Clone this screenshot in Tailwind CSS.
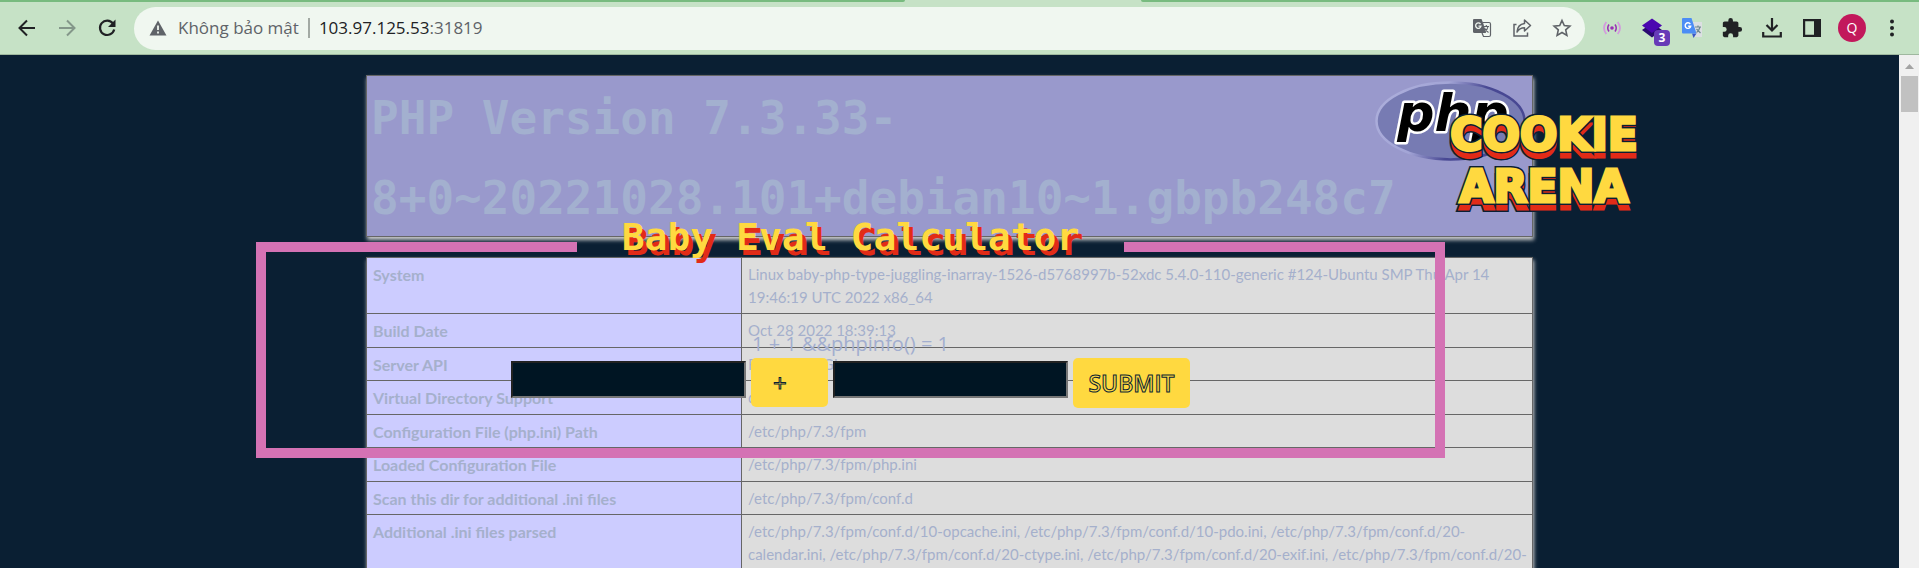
<!DOCTYPE html>
<html lang="vi">
<head>
<meta charset="utf-8">
<title>Baby Eval Calculator</title>
<script src="https://cdn.jsdelivr.net/npm/@tailwindcss/browser@4"></script>
</head>
<body class="flex h-screen flex-col overflow-hidden bg-[#0a1f33] font-['Open_Sans',sans-serif]">

<!-- bottom edge of the tab strip, with the active tab in the toolbar colour -->
<div aria-hidden="true" class="flex h-0.5 shrink-0 bg-[#c6e2c6]">
  <div class="w-[905px] rounded-br-sm bg-[#78bb7f]"></div>
  <div class="w-[236px]"></div>
  <div class="flex-1 rounded-bl-sm bg-[#78bb7f]"></div>
</div>

<header class="flex h-[53px] shrink-0 items-center border-b border-b-[#9fb89f] bg-[#c6e2c6] px-[7px] text-[#202124]">
  <button aria-label="Back" class="flex w-10 justify-center"><svg width="20" height="20" viewBox="0 0 20 20" fill="none" stroke="#202124" stroke-width="2"><path d="M18 10H3M10 2.500L2.500 10L10 17.500"/></svg></button>
  <button aria-label="Forward" class="flex w-10 justify-center"><svg width="20" height="20" viewBox="0 0 20 20" fill="none" stroke="#84978a" stroke-width="2"><path d="M2 10H17M10 2.500L17.500 10L10 17.500"/></svg></button>
  <button aria-label="Reload" class="flex w-10 justify-center"><svg width="20" height="20" viewBox="0 0 20 20"><path d="M16 5.500A7.200 7.200 0 1 0 17.200 11.500" fill="none" stroke="#202124" stroke-width="2.200"/><path d="M18.500 1.500V9H11Z" fill="#202124"/></svg></button>

  <div class="mx-[7px] flex h-[43px] flex-1 items-center rounded-full bg-[#f0f7f0] pr-[3px] pl-[15px] text-[17px] whitespace-nowrap">
    <svg width="18" height="16" viewBox="0 0 18 16" aria-hidden="true"><path d="M9 0.500L17.500 15.500H.5Z" fill="#5f6368"/><path d="M9 5.500V10M9 11.500V13.500" stroke="#f0f7f0" stroke-width="1.800"/></svg>
    <span class="ml-[11px] text-[#5f6368]">Không bảo mật</span>
    <span class="mx-[9px] h-5 w-0.5 bg-[#a3aaa4]"></span>
    <span class="text-[#202124]">103.97.125.53<span class="text-[#5f6368]">:31819</span></span>
    <div class="ml-auto flex">
      <button aria-label="Translate this page" class="flex w-10 justify-center"><svg width="20" height="20" viewBox="0 0 20 20"><path d="M2 1H9.500L11.500 6L14 15H2.500Q1 15 1 13.500V2Q1 1 2 1Z" fill="#5f6368"/><path d="M10.500 4.500H17Q18.500 4.500 18.500 6V17Q18.500 18.500 17 18.500H11.500L10 15" fill="none" stroke="#5f6368" stroke-width="1.200"/><path d="M8.500 6A2.700 2.700 0 1 0 9 8.200H6.500" fill="none" stroke="#f0f7f0" stroke-width="1.300"/><path d="M11.500 8.500H17M14.300 7V8.500M16 8.500Q15.500 12 12.500 14M12.500 10Q14 13 16.500 14.500" fill="none" stroke="#5f6368" stroke-width="1.100"/></svg></button>
      <button aria-label="Share" class="flex w-10 justify-center"><svg width="20" height="20" viewBox="0 0 20 20" fill="none" stroke="#5f6368" stroke-width="1.500"><path d="M4.500 6.500H2V18H15.500V14.500"/><path d="M12.500 2L18.500 7.500L12.500 13V9.800Q7.500 9.800 5 14Q5.500 6.500 12.500 5.500Z" stroke-linejoin="round"/></svg></button>
      <button aria-label="Bookmark" class="flex w-10 justify-center"><svg width="20" height="20" viewBox="0 0 20 20" fill="none" stroke="#5f6368" stroke-width="1.600"><path d="M10 2.500L12.300 7.600L17.900 8.200L13.700 11.900L14.900 17.400L10 14.500L5.100 17.400L6.300 11.900L2.100 8.200L7.700 7.600Z"/></svg></button>
    </div>
  </div>

  <nav aria-label="Extensions" class="flex items-center">
    <button aria-label="Live signal" class="flex w-10 justify-center"><svg width="20" height="20" viewBox="0 0 20 20" fill="none"><circle cx="10" cy="10" r="1.800" fill="#9a2fb5"/><path d="M7 6.500Q4.500 10 7 13.500M13 6.500Q15.500 10 13 13.500" stroke="#9a2fb5" stroke-width="1.500"/><path d="M4.300 4Q-.3 10 4.300 16M15.700 4Q20.300 10 15.700 16" stroke="#d39add" stroke-width="1.800"/></svg></button>
    <button aria-label="Layers, 3" class="flex w-10 justify-center"><span class="relative"><svg width="20" height="20" viewBox="0 0 20 20"><path d="M0 12L10 5L20 12L10 19.500Z" fill="#2a0a70"/><path d="M0 7.500L10 .5L20 7.500L10 15Z" fill="#4a06b0"/></svg><span class="absolute -right-2 -bottom-2 flex size-4 items-center justify-center rounded-sm bg-[#673ab7] text-xs font-bold text-white">3</span></span></button>
    <button aria-label="Google Translate" class="flex w-10 justify-center"><svg width="20" height="20" viewBox="0 0 20 20"><path d="M9 4H20V19H13Z" fill="#dcdfe2"/><path d="M10 15.500H14.500L11.500 20Z" fill="#3a55c5"/><path d="M1 0H9.500L14.500 15.500H1Q0 15.500 0 14.500V1Q0 0 1 0Z" fill="#4c8df5"/><path d="M8.300 6A2.800 2.800 0 1 0 8.700 8.300H6.200" fill="none" stroke="#fff" stroke-width="1.400"/><path d="M13 9H19M16 7.500V9M18 9Q17 13 14.500 14.500M14.500 11L18.500 15" fill="none" stroke="#6d8790" stroke-width="1.200"/></svg></button>
    <button aria-label="Extensions menu" class="flex w-10 justify-center"><svg width="22" height="22" viewBox="0 0 24 24"><path fill="#202124" d="M20.500 11H19V7c0-1.100-.9-2-2-2h-4V3.500a2.500 2.500 0 0 0-5 0V5H4c-1.100 0-2 .9-2 2v3.800h1.500a2.700 2.700 0 0 1 0 5.400H2V20c0 1.100.9 2 2 2h3.800v-1.500a2.700 2.700 0 0 1 5.400 0V22H17c1.100 0 2-.9 2-2v-4h1.500a2.500 2.500 0 0 0 0-5z"/></svg></button>
    <button aria-label="Downloads" class="flex w-10 justify-center"><svg width="20" height="20" viewBox="0 0 20 20" fill="none" stroke="#202124" stroke-width="2.200"><path d="M10 0V12M4.500 7L10 12.500L15.500 7M1.200 14V18.500H18.800V14"/></svg></button>
    <button aria-label="Side panel" class="flex w-10 justify-center"><svg width="18" height="18" viewBox="0 0 18 18"><path fill="#202124" fill-rule="evenodd" d="M0 0H18V18H0ZM2.200 2.200V15.800H11V2.200Z"/></svg></button>
    <button aria-label="Profile" class="flex w-10 justify-center"><span class="flex size-7 items-center justify-center rounded-full bg-[#c2185b] text-sm text-white">Q</span></button>
    <button aria-label="Menu" class="flex w-10 justify-center"><svg width="4" height="18" viewBox="0 0 4 18" fill="#202124"><circle cx="2" cy="2.500" r="2"/><circle cx="2" cy="9" r="2"/><circle cx="2" cy="15.500" r="2"/></svg></button>
  </nav>
</header>

<div class="flex min-h-0 flex-1">
  <main class="relative min-w-0 flex-1 overflow-hidden pt-5 text-[#a5b0cc]">
    <section class="mx-auto mb-5 flex w-[1167px] max-w-full justify-between border border-[#666] bg-[#9999cc] pl-1 shadow-[1px_3px_4px_#ccc]">
      <h1 class="h-40 pt-0.5 font-['DejaVu_Sans_Mono',monospace] text-[46px] leading-[80px] font-bold whitespace-nowrap text-[#a3b0cf]">PHP Version 7.3.33-<br>8+0~20221028.101+debian10~1.gbpb248c7</h1>
      <svg class="mt-[5px] mr-1.5 -ml-24 shrink-0" width="151" height="80" viewBox="0 0 151 80" role="img" aria-label="PHP logo">
        <defs><linearGradient id="rim" x1="0" y1="0" x2="1" y2="0.300"><stop offset="0" stop-color="#aeb0dc"/><stop offset=".45" stop-color="#a3a5d6"/><stop offset=".7" stop-color="#484893"/><stop offset="1" stop-color="#484893"/></linearGradient></defs>
        <ellipse cx="75.500" cy="40" rx="74" ry="38.500" fill="#777bb3" stroke="url(#rim)" stroke-width="2.500"/>
        <text x="78" y="50" text-anchor="middle" font-family="DejaVu Sans" font-weight="bold" font-style="italic" font-size="52" fill="#000" stroke="#fff" stroke-width="5" paint-order="stroke" stroke-linejoin="round">php</text>
      </svg>
    </section>

    <table class="mx-auto w-[1167px] max-w-full table-fixed border-collapse text-left align-top font-['Lato',sans-serif] leading-[23px] shadow-[1px_3px_4px_#ccc] [&_td]:border [&_td]:border-[#666] [&_td]:bg-[#dddddd] [&_td]:px-1.5 [&_td]:pt-[5px] [&_td]:pb-1 [&_td]:align-top [&_td]:text-[15px] [&_td]:leading-[23px] [&_th]:border [&_th]:border-[#666] [&_th]:bg-[#ccccff] [&_th]:px-1.5 [&_th]:pt-[5px] [&_th]:pb-1 [&_th]:align-top [&_tr:nth-child(even)>*]:pb-[5px]">
      <colgroup><col class="w-[375px]"><col></colgroup>
      <tbody>
        <tr><th scope="row">System</th><td>Linux baby-php-type-juggling-inarray-1526-d5768997b-52xdc 5.4.0-110-generic #124-Ubuntu SMP Thu Apr 14<br>19:46:19 UTC 2022 x86_64</td></tr>
        <tr><th scope="row">Build Date</th><td>Oct 28 2022 18:39:13</td></tr>
        <tr><th scope="row">Server API</th><td>FPM/FastCGI</td></tr>
        <tr><th scope="row">Virtual Directory Support</th><td>disabled</td></tr>
        <tr><th scope="row">Configuration File (php.ini) Path</th><td>/etc/php/7.3/fpm</td></tr>
        <tr><th scope="row">Loaded Configuration File</th><td>/etc/php/7.3/fpm/php.ini</td></tr>
        <tr><th scope="row">Scan this dir for additional .ini files</th><td>/etc/php/7.3/fpm/conf.d</td></tr>
        <tr><th scope="row">Additional .ini files parsed</th><td class="whitespace-nowrap">/etc/php/7.3/fpm/conf.d/10-opcache.ini, /etc/php/7.3/fpm/conf.d/10-pdo.ini, /etc/php/7.3/fpm/conf.d/20-<br>calendar.ini, /etc/php/7.3/fpm/conf.d/20-ctype.ini, /etc/php/7.3/fpm/conf.d/20-exif.ini, /etc/php/7.3/fpm/conf.d/20-</td></tr>
      </tbody>
    </table>

    <!-- calculator and logo float over the phpinfo output -->
    <form class="absolute inset-x-0 top-[58px] flex items-start justify-center">
      <fieldset class="mt-[99px] h-[246px] w-[1189px] border-10 border-[#d472b4]">
        <legend class="mx-auto h-[70px] px-[45px] font-['DejaVu_Sans_Mono',monospace] text-[38px] leading-[50px] font-bold whitespace-nowrap text-[#ffd940] text-shadow-[4px_5px_0_#e22b17]">Baby Eval Calculator</legend>
        <p class="mt-12 text-center text-[20px] leading-7 text-[#a2aecf]">1 + 1 &amp;&amp;phpinfo() = 1</p>
        <div class="flex items-start justify-center gap-[5px] text-2xl">
          <input aria-label="First number" class="mt-[3px] h-[37px] w-[235px] border-2 border-t-[#222] border-r-[#767676] border-b-[#767676] border-l-[#222] bg-[#001523]">
          <select aria-label="Operator" class="h-[49px] w-[77px] appearance-none rounded-[5px] bg-[#ffd940] pl-[22px] text-[#ffd940] [-webkit-text-stroke:1px_#0a1f33]"><option>+</option></select>
          <input aria-label="Second number" class="mt-[3px] h-[37px] w-[235px] border-2 border-t-[#222] border-r-[#767676] border-b-[#767676] border-l-[#222] bg-[#001523]">
          <button class="h-[50px] w-[117px] rounded-[5px] bg-[#ffd940] text-[23px] font-semibold text-[#ffd940] [-webkit-text-stroke:1px_#0a1f33]">SUBMIT</button>
        </div>
      </fieldset>
      <svg class="shrink-0" width="198" height="102" viewBox="0 0 198 102" role="img" aria-label="Cookie Arena" font-family="DejaVu Sans" font-weight="bold" font-size="44" text-anchor="middle" stroke-linejoin="miter">
        <g fill="#e22b17" stroke="#0a1f33" stroke-width="6" paint-order="stroke"><text x="99" y="44">COOKIE</text><text x="99" y="96">ARENA</text></g>
        <g fill="#e22b17" stroke="#e22b17" stroke-width="3"><text x="99" y="44">COOKIE</text><text x="99" y="96">ARENA</text></g>
        <g fill="#0a1f33" stroke="#0a1f33" stroke-width="6"><text x="99" y="37">COOKIE</text><text x="99" y="89">ARENA</text></g>
        <g fill="#ffd940" stroke="#ffd940" stroke-width="3"><text x="99" y="37">COOKIE</text><text x="99" y="89">ARENA</text></g>
      </svg>
    </form>
  </main>

  <div aria-hidden="true" class="flex w-5 shrink-0 flex-col items-center bg-[#f0f0f0] pt-[9px]">
    <svg width="9" height="5" viewBox="0 0 9 5"><path d="M0 5L4.500 0L9 5Z" fill="#a3a3a3"/></svg>
    <div class="mt-[7px] h-9 w-[17px] bg-[#c1c1c1]"></div>
  </div>
</div>
</body>
</html>
